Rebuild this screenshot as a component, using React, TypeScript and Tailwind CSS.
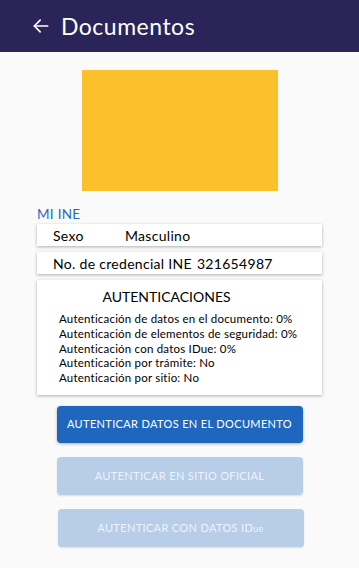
import React from 'react';

const font = { fontFamily: '"Lato", "Noto Sans", sans-serif' };

const lines = [
  'Autenticación de datos en el documento: 0%',
  'Autenticación de elementos de seguridad: 0%',
  'Autenticación con datos IDue: 0%',
  'Autenticación por trámite: No',
  'Autenticación por sitio: No',
];

export default function App() {
  return (
    <div className="w-[359px] h-[568px] bg-[#fafafa] overflow-hidden" style={font}>
      <div className="h-[52px] bg-[#2b2458] flex items-center pl-[31px]">
        <svg width="20" height="20" viewBox="0 0 24 24" fill="none" stroke="white" strokeWidth="2" strokeLinecap="round" strokeLinejoin="round">
          <path d="M20 12H4" />
          <path d="M11 5l-7 7 7 7" />
        </svg>
        <h1 className="ml-[10px] text-white text-[23px] leading-none tracking-[0.5px]">Documentos</h1>
      </div>

      <div className="flex justify-center pt-[18px]">
        <div className="w-[196px] h-[121px] bg-[#fcc02c]" />
      </div>

      <div className="px-[37px] pt-[15px]">
        <div className="text-[#1e6bc4] text-[13.5px] leading-[16px] tracking-[0.3px]">MI INE</div>

        <div className="mt-[2px] bg-white h-[22px] shadow-[0_1px_3px_rgba(0,0,0,0.3)] flex items-center pl-[16px] text-[14px] tracking-[0.3px] text-black">
          <span className="w-[72px]">Sexo</span>
          <span>Masculino</span>
        </div>

        <div className="mt-[6px] bg-white h-[22px] shadow-[0_1px_3px_rgba(0,0,0,0.3)] flex items-center pl-[16px] text-[14px] tracking-[0.3px] text-black">
          <span>No. de credencial INE</span>
          <span className="ml-[5px]">321654987</span>
        </div>

        <div className="mt-[6px] bg-white h-[115px] shadow-[0_1px_3px_rgba(0,0,0,0.3)] pt-[8px]">
          <div className="text-[14px] text-black text-center pr-[26px] leading-[18px]">AUTENTICACIONES</div>
          <div className="mt-[6px] pl-[22px] text-[11.5px] tracking-[0.2px] leading-[14.8px] text-black">
            {lines.map(l => (
              <div key={l}>{l}</div>
            ))}
          </div>
        </div>
      </div>

      <div className="flex flex-col items-center pt-[11px] gap-[14px]">
        <button className="w-[246px] h-[37px] rounded-[4px] bg-[#1f67be] text-white text-[11px] tracking-[0.35px] shadow-[0_1px_3px_rgba(0,0,0,0.3)]">
          AUTENTICAR DATOS EN EL DOCUMENTO
        </button>
        <button className="w-[246px] h-[38px] rounded-[4px] bg-[#b7cde8] text-[#eef3fa] text-[11px] tracking-[0.35px] shadow-[0_1px_2px_rgba(0,0,0,0.12)]">
          AUTENTICAR EN SITIO OFICIAL
        </button>
        <button className="w-[246px] h-[38px] ml-[2px] rounded-[4px] bg-[#b7cde8] text-[#eef3fa] text-[11px] tracking-[0.35px] shadow-[0_1px_2px_rgba(0,0,0,0.12)]">
          AUTENTICAR CON DATOS ID<span className="text-[9px]">ue</span>
        </button>
      </div>
    </div>
  );
}
